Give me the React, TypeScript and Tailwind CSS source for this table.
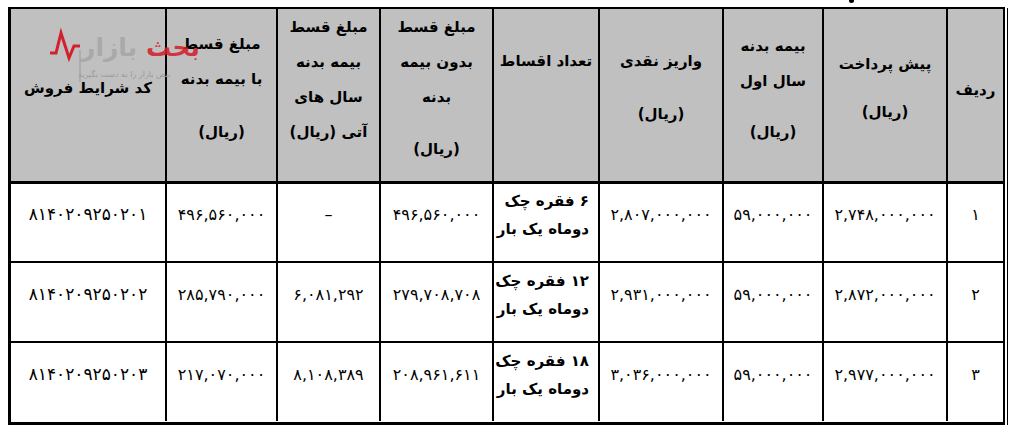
import * as React from "react";

type Line = { t: string; cls?: string };
type Head = { w: string; pt: string; lh: string; lines: Line[] };

// ستون‌ها از راست به چپ
const heads: Head[] = [
  { w: "w-[57px]", pt: "pt-[71px]", lh: "leading-[20px]", lines: [{ t: "ردیف" }] },
  { w: "w-[124px]", pt: "pt-[38px]", lh: "leading-[35px]", lines: [{ t: "پیش پرداخت" }, { t: "(ریال)", cls: "mt-[13px]" }] },
  { w: "w-[100px]", pt: "pt-[20px]", lh: "leading-[35px]", lines: [{ t: "بیمه بدنه" }, { t: "سال اول" }, { t: "(ریال)", cls: "mt-[16px]" }] },
  { w: "w-[124px]", pt: "pt-[35px]", lh: "leading-[35px]", lines: [{ t: "واریز نقدی" }, { t: "(ریال)", cls: "mt-[18px]" }] },
  { w: "w-[106px]", pt: "pt-[35px]", lh: "leading-[35px]", lines: [{ t: "تعداد اقساط" }] },
  { w: "w-[113px]", pt: "pt-[1px]", lh: "leading-[35px]", lines: [{ t: "مبلغ قسط" }, { t: "بدون بیمه" }, { t: "بدنه" }, { t: "(ریال)", cls: "mt-[17px]" }] },
  { w: "w-[103px]", pt: "pt-[1px]", lh: "leading-[35px]", lines: [{ t: "مبلغ قسط" }, { t: "بیمه بدنه" }, { t: "سال های" }, { t: "آتی (ریال)" }] },
  { w: "w-[111px]", pt: "pt-[18px]", lh: "leading-[35px]", lines: [{ t: "مبلغ قسط" }, { t: "با بیمه بدنه" }, { t: "(ریال)", cls: "mt-[18px]" }] },
  { w: "w-[154px]", pt: "pt-[69px]", lh: "leading-[20px]", lines: [{ t: "کد شرایط فروش" }] },
];

const rows = [
  { h: "h-[79px]", cells: ["۱", "۲,۷۴۸,۰۰۰,۰۰۰", "۵۹,۰۰۰,۰۰۰", "۲,۸۰۷,۰۰۰,۰۰۰", "۶ فقره چک", "۴۹۶,۵۶۰,۰۰۰", "–", "۴۹۶,۵۶۰,۰۰۰", "۸۱۴۰۲۰۹۲۵۰۲۰۱"] },
  { h: "h-[80px]", cells: ["۲", "۲,۸۷۲,۰۰۰,۰۰۰", "۵۹,۰۰۰,۰۰۰", "۲,۹۳۱,۰۰۰,۰۰۰", "۱۲ فقره چک", "۲۷۹,۷۰۸,۷۰۸", "۶,۰۸۱,۲۹۲", "۲۸۵,۷۹۰,۰۰۰", "۸۱۴۰۲۰۹۲۵۰۲۰۲"] },
  { h: "h-[78px]", cells: ["۳", "۲,۹۷۷,۰۰۰,۰۰۰", "۵۹,۰۰۰,۰۰۰", "۳,۰۳۶,۰۰۰,۰۰۰", "۱۸ فقره چک", "۲۰۸,۹۶۱,۶۱۱", "۸,۱۰۸,۳۸۹", "۲۱۷,۰۷۰,۰۰۰", "۸۱۴۰۲۰۹۲۵۰۲۰۳"] },
];

// واترمارک لوگو روی سرستون
function Logo() {
  return (
    <div className="absolute left-[48px] top-[26px] w-[134px] h-[58px] pointer-events-none" dir="ltr">
      <svg width="40" height="58" viewBox="0 0 40 58" className="absolute left-0 top-0">
        <polyline points="2,27 8,27 13,7 21,32 26,20 32,20" fill="none" stroke="#d3202f" strokeWidth="3" strokeLinejoin="miter" />
        <line x1="32" y1="24" x2="32" y2="56" stroke="#9a9a9a" strokeWidth="1" />
      </svg>
      <span className="absolute left-[33px] top-[6px] text-[25px] leading-[32px] font-bold text-[#a3a3a3]/80">بازار</span>
      <span className="absolute left-[98px] top-[6px] text-[25px] leading-[32px] font-bold text-[#d3202f]/90">بحث</span>
      <span className="absolute left-[30px] top-[44px] text-[8px] leading-[10px] text-[#9a9a9a] whitespace-nowrap" dir="rtl">
        نبض بازار را به دست بگیرید
      </span>
    </div>
  );
}

export default function App() {
  return (
    <div className="relative w-[1024px] h-[431px] overflow-hidden bg-white text-black font-['DejaVu_Sans',sans-serif]">
      <div className="flex pl-[8px] pt-[7px]">
        <div className="border-l-[3px] border-t-[2px] border-b-[3px] border-r-[2px] border-black">
          <table dir="rtl" className="w-[992px] table-fixed border-separate border-spacing-0">
            <thead>
              <tr className="h-[175px]">
                {heads.map((h, i) => (
                  <th
                    key={i}
                    className={`${h.w} ${h.pt} align-top p-0 bg-[#c0c0c0] border-b-[3px] border-black font-bold text-[15px] ${i < heads.length - 1 ? "border-l-2" : ""}`}
                  >
                    {h.lines.map((l, j) => (
                      <div key={j} className={`${h.lh} whitespace-nowrap ${l.cls ?? ""}`}>{l.t}</div>
                    ))}
                  </th>
                ))}
              </tr>
            </thead>
            <tbody>
              {rows.map((r, ri) => (
                <tr key={ri} className={r.h}>
                  {r.cells.map((c, ci) => (
                    <td
                      key={ci}
                      className={`p-0 pb-[15px] align-middle border-black ${ci < 8 ? "border-l-2" : ""} ${ri < 2 ? "border-b-2" : ""} ${ci === 4 ? "text-right pr-[9px]" : "text-center"}`}
                    >
                      {ci === 4 ? (
                        <div className="font-bold text-[15px] leading-[28px] whitespace-nowrap">
                          <div>{c}</div>
                          <div>دوماه یک بار</div>
                        </div>
                      ) : (
                        <span className={`${ci === 8 ? "text-[17px]" : "text-[16px]"} whitespace-nowrap`}>{c}</span>
                      )}
                    </td>
                  ))}
                </tr>
              ))}
            </tbody>
          </table>
        </div>
        <div className="ml-[2px] mt-[1px] w-px h-[417px] bg-black" />
      </div>
      <div className="absolute left-[849px] top-0 w-[5px] h-[3px] rounded-b-full bg-black" />
      <Logo />
    </div>
  );
}
